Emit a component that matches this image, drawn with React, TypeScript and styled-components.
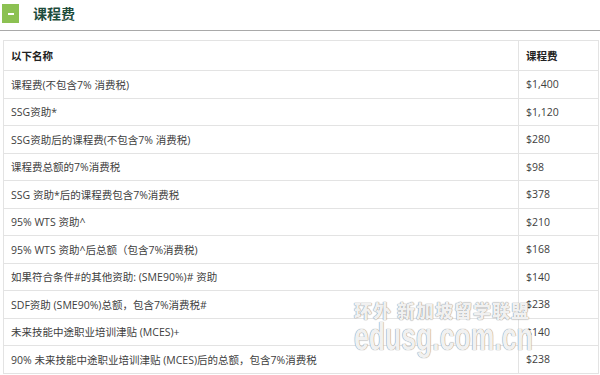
import React from 'react';
import styled, { createGlobalStyle } from 'styled-components';

const Global = createGlobalStyle`
  html, body { margin: 0; padding: 0; background: #fff; }
  body { font-family: "Open Sans", "Noto Sans CJK SC", sans-serif; }
`;

const Page = styled.div`
  position: relative;
  width: 600px;
  height: 375px;
  overflow: hidden;
`;

const TitleBar = styled.div`
  display: flex;
  align-items: center;
  gap: 14px;
  height: 30px;
  padding-left: 2px;
  border-bottom: 1px solid #a9a9a9;
`;

const Toggle = styled.div`
  width: 17px;
  height: 19px;
  background: #8cc152;
  display: flex;
  align-items: center;
  justify-content: center;
  margin-top: -3px;
  &::after {
    content: '';
    width: 6px;
    height: 2px;
    background: #fff;
  }
`;

const Title = styled.h2`
  margin: -4px 0 0;
  font-family: "Noto Sans CJK SC", sans-serif;
  font-size: 14px;
  font-weight: 700;
  color: #1e4d3c;
`;

const Table = styled.table`
  margin: 9px 0 0 3px;
  width: 596px;
  border-collapse: collapse;
  font-size: 10.5px;
  color: #404040;
  td, th {
    border: 1px solid #e3e3e3;
    padding: 0 0 0 7px;
    text-align: left;
    white-space: nowrap;
  }
`;

const Head = styled.th<{ $w?: number }>`
  height: 29px;
  font-weight: 700;
  color: #222;
  width: ${(p) => (p.$w ? `${p.$w}px` : 'auto')};
`;

const Cell = styled.td`
  height: 26.5px;
`;

const Watermark = styled.div`
  position: absolute;
  left: 354px;
  top: 299px;
  color: rgba(255, 255, 255, 0.9);
  text-shadow: 0 0 1px #8f8f8f, 0 0 1px #8f8f8f;
  font-weight: 900;
  white-space: nowrap;
  pointer-events: none;
`;

const MarkCn = styled.div`
  font-family: "Noto Sans CJK SC", serif;
  font-size: 18px;
  line-height: 22px;
  letter-spacing: 1px;
`;

const MarkEn = styled.div`
  font-family: "Liberation Sans", sans-serif;
  font-size: 38px;
  line-height: 32px;
  transform: scaleX(0.7);
  transform-origin: left center;
`;

const rows: [string, string][] = [
  ['课程费(不包含7% 消费税)', '$1,400'],
  ['SSG资助*', '$1,120'],
  ['SSG资助后的课程费(不包含7% 消费税)', '$280'],
  ['课程费总额的7%消费税', '$98'],
  ['SSG 资助*后的课程费包含7%消费税', '$378'],
  ['95% WTS 资助^', '$210'],
  ['95% WTS 资助^后总额（包含7%消费税)', '$168'],
  ['如果符合条件#的其他资助: (SME90%)# 资助', '$140'],
  ['SDF资助 (SME90%)总额，包含7%消费税#', '$238'],
  ['未来技能中途职业培训津贴 (MCES)+', '$140'],
  ['90% 未来技能中途职业培训津贴 (MCES)后的总额，包含7%消费税', '$238'],
];

function App() {
  return (
    <>
      <Global />
      <Page>
        <TitleBar>
          <Toggle />
          <Title>课程费</Title>
        </TitleBar>
        <Table>
          <thead>
            <tr>
              <Head>以下名称</Head>
              <Head $w={72}>课程费</Head>
            </tr>
          </thead>
          <tbody>
            {rows.map(([name, fee]) => (
              <tr key={name}>
                <Cell>{name}</Cell>
                <Cell>{fee}</Cell>
              </tr>
            ))}
          </tbody>
        </Table>
        <Watermark>
          <MarkCn>环外 新加坡留学联盟</MarkCn>
          <MarkEn>edusg.com.cn</MarkEn>
        </Watermark>
      </Page>
    </>
  );
}

export default App;
